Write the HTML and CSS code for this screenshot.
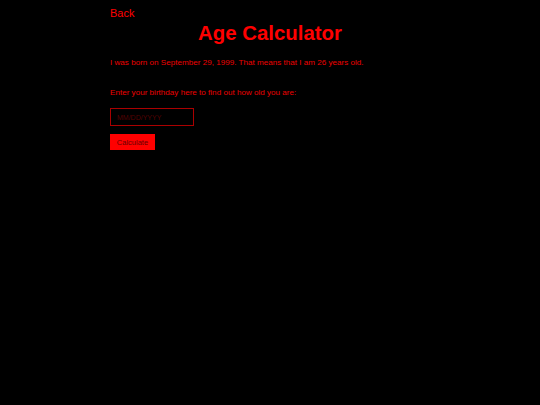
FILE: index.html
```html
<!DOCTYPE html>
<html>
<head>
<meta charset="utf-8">
<link rel="stylesheet" href="styles.css">
</head>
<body>
<div class="page">
  <a class="back" href="#">Back</a>
  <h1 class="title">Age Calculator</h1>
  <p class="text">I was born on September 29, 1999. That means that I am 26 years old.</p>
  <p class="text prompt">Enter your birthday here to find out how old you are:</p>
  <input class="date" type="text" placeholder="MM/DD/YYYY">
  <button class="calc">Calculate</button>
</div>
</body>
</html>
```
FILE: styles.css
```css
html, body {
  margin: 0;
  padding: 0;
  background: #000;
  height: 100%;
}
body {
  font-family: "Liberation Sans", Arial, sans-serif;
  color: #e00;
}
.page {
  width: 320px;
  margin: 0 auto;
  display: flex;
  flex-direction: column;
  align-items: flex-start;
}
.back {
  color: #f00;
  text-decoration: none;
  font-size: 11px;
  line-height: 13px;
  margin-top: 7px;
}
.title {
  align-self: center;
  margin: 0;
  margin-top: 1px;
  font-size: 20.4px;
  line-height: 24px;
  font-weight: bold;
  color: #f00;
}
.text {
  font-size: 8.1px;
  line-height: 10px;
  margin: 0;
  margin-top: 13px;
  color: #e00;
}
.prompt {
  margin-top: 20px;
}
.date {
  box-sizing: border-box;
  width: 84px;
  height: 18px;
  margin-top: 10px;
  background: #000;
  border: 1px solid #a00;
  padding: 0 6px;
  font-family: "Liberation Sans", Arial, sans-serif;
  font-size: 7px;
  color: #600;
  outline: none;
}
.date::placeholder {
  color: #500;
}
.calc {
  margin-top: 8px;
  width: 45px;
  height: 16px;
  background: #f00;
  border: none;
  padding: 0;
  font-family: "Liberation Sans", Arial, sans-serif;
  font-size: 7.5px;
  color: #600;
}
```
